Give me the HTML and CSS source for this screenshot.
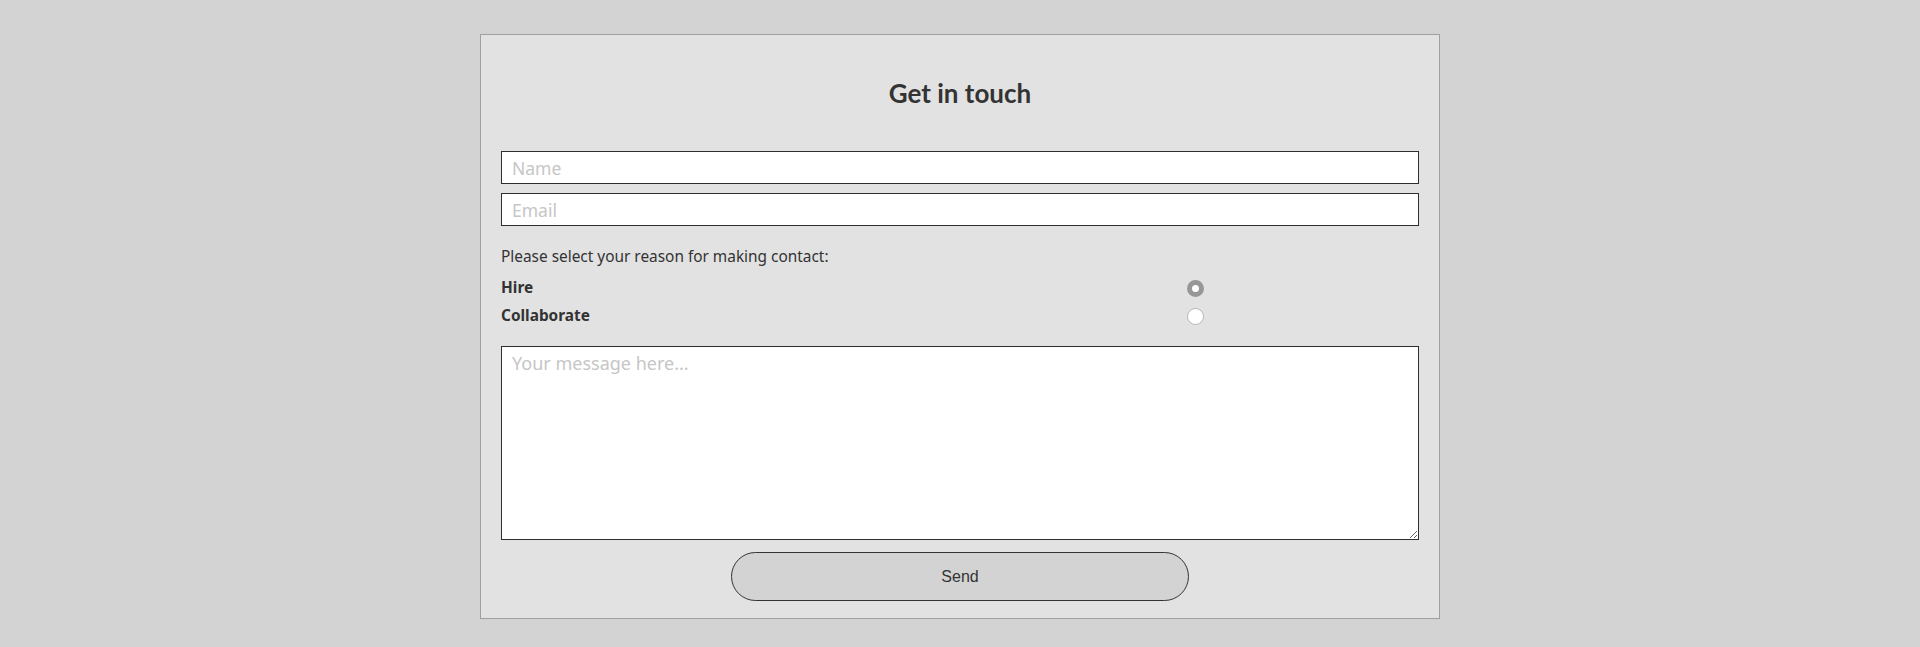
FILE: index.html
```html
<!DOCTYPE html>
<html lang="en">
<head>
<meta charset="utf-8">
<title>Get in touch</title>
<link rel="stylesheet" href="styles.css">
</head>
<body>
<main class="page">
  <form class="card">
    <h1 class="title">Get in touch</h1>
    <div class="fields">
      <input class="field" type="text" placeholder="Name">
      <input class="field" type="email" placeholder="Email">
    </div>
    <p class="prompt">Please select your reason for making contact:</p>
    <div class="choices">
      <label class="choice-label" for="r-hire">Hire</label>
      <input class="radio" type="radio" id="r-hire" name="reason" checked>
      <label class="choice-label" for="r-collab">Collaborate</label>
      <input class="radio" type="radio" id="r-collab" name="reason">
    </div>
    <textarea class="message" placeholder="Your message here..."></textarea>
    <div class="actions">
      <button class="send" type="button">Send</button>
    </div>
  </form>
</main>
</body>
</html>
```

FILE: styles.css
```css
html, body {
  margin: 0;
  padding: 0;
  background: #d3d3d3;
}

body {
  font-family: "Noto Sans", "Open Sans", sans-serif;
  color: #333;
}

.page {
  padding-top: 34px;
  display: flex;
  justify-content: center;
}

.card {
  box-sizing: border-box;
  width: 960px;
  background: #e2e2e2;
  border: 1px solid #a0a0a0;
  padding: 42px 20px 17px;
  display: flex;
  flex-direction: column;
}

.title {
  margin: 0;
  font-family: "Lato", "Noto Sans", sans-serif;
  font-size: 26px;
  line-height: 32px;
  font-weight: 700;
  text-align: center;
  color: #333;
}

.fields {
  margin-top: 42px;
  display: flex;
  flex-direction: column;
  gap: 9px;
}

.field {
  box-sizing: border-box;
  height: 33px;
  width: 100%;
  margin: 0;
  padding: 0 10px;
  border: 1px solid #2e2e2e;
  background: #fff;
  font-family: "Noto Sans", "Open Sans", sans-serif;
  font-size: 17.5px;
  color: #333;
  outline: none;
}

.field::placeholder,
.message::placeholder {
  color: #c6c6c6;
}

.prompt {
  margin: 21px 0 0;
  font-size: 15.4px;
  line-height: 20px;
}

.choices {
  margin-top: 7px;
  display: grid;
  grid-template-columns: 686px 17px;
  grid-auto-rows: 28px;
  align-items: center;
}

.choice-label {
  font-size: 15.4px;
  font-weight: 700;
  line-height: 20px;
}

.radio {
  -webkit-appearance: none;
  appearance: none;
  box-sizing: border-box;
  width: 17px;
  height: 17px;
  margin: 0;
  border-radius: 50%;
  border: 1px solid #b5b5b5;
  background: #fff;
}

.radio:checked {
  border: 5.5px solid #979797;
  background: #fff;
}

.message {
  box-sizing: border-box;
  display: block;
  width: 100%;
  height: 194px;
  margin: 16px 0 0;
  padding: 4px 10px;
  border: 1px solid #2e2e2e;
  background: #fff;
  font-family: "Noto Sans", "Open Sans", sans-serif;
  font-size: 18px;
  color: #333;
  resize: both;
  outline: none;
}

.actions {
  margin-top: 12px;
  display: flex;
  justify-content: center;
}

.send {
  box-sizing: border-box;
  width: 458px;
  height: 49px;
  border: 1px solid #333;
  border-radius: 25px;
  background: #d3d3d3;
  font-family: "Liberation Sans", Arial, sans-serif;
  font-size: 16px;
  color: #333;
  cursor: pointer;
}
```
